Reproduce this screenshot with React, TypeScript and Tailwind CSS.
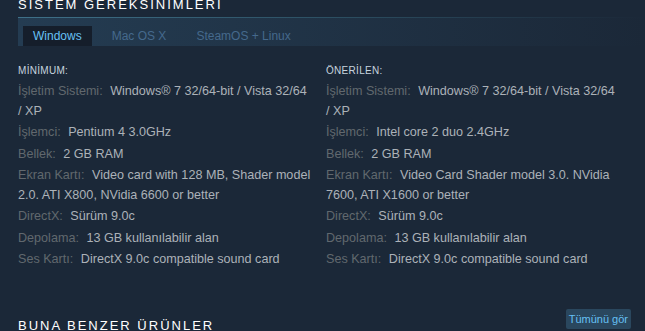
import React from "react";

type Row = { label: string; value: string };

const minRows: Row[] = [
  { label: "İşletim Sistemi:", value: "Windows® 7 32/64-bit / Vista 32/64 /\u00a0XP" },
  { label: "İşlemci:", value: "Pentium 4 3.0GHz" },
  { label: "Bellek:", value: "2 GB RAM" },
  { label: "Ekran Kartı:", value: "Video card with 128 MB, Shader model 2.0. ATI X800, NVidia 6600 or better" },
  { label: "DirectX:", value: "Sürüm 9.0c" },
  { label: "Depolama:", value: "13 GB kullanılabilir alan" },
  { label: "Ses Kartı:", value: "DirectX 9.0c compatible sound card" },
];

const recRows: Row[] = [
  { label: "İşletim Sistemi:", value: "Windows® 7 32/64-bit / Vista 32/64 /\u00a0XP" },
  { label: "İşlemci:", value: "Intel core 2 duo 2.4GHz" },
  { label: "Bellek:", value: "2 GB RAM" },
  { label: "Ekran Kartı:", value: "Video Card Shader model 3.0. NVidia 7600, ATI X1600 or better" },
  { label: "DirectX:", value: "Sürüm 9.0c" },
  { label: "Depolama:", value: "13 GB kullanılabilir alan" },
  { label: "Ses Kartı:", value: "DirectX 9.0c compatible sound card" },
];

function Col({ title, rows, className }: { title: string; rows: Row[]; className?: string }) {
  return (
    <div className={className}>
      <div className="text-[10px] leading-[14px] tracking-[0.3px] text-[#c6d4df] mb-[4px]">{title}</div>
      <ul>
        {rows.map((r) => (
          <li key={r.label} className="text-[12.6px] leading-[19.5px] mb-[2px]">
            <span className="text-[#61686e] mr-[4px]">{r.label}</span>{" "}
            <span className="text-[#acb2b8]">{r.value}</span>
          </li>
        ))}
      </ul>
    </div>
  );
}

export default function App() {
  return (
    <div
      className="w-[645px] h-[331px] overflow-hidden bg-[#1b2838]"
      style={{ fontFamily: '"Liberation Sans", Arial, sans-serif' }}
    >
      <div className="pl-[18px] pr-[14px]">
        <h2 className="-mt-[2px] text-[13px] leading-[13px] tracking-[2px] text-white font-normal">
          SISTEM GEREKSINIMLERI
        </h2>
        <div className="mt-[6px] -mr-[14px]">
          <div className="h-px bg-gradient-to-r from-[#3f7189] via-[#2c4f62] to-[#1b2838]" />
          <div className="h-[28px] flex items-end gap-[10px] pl-[5px] bg-gradient-to-r from-[#243c52] to-[#1b2838]">
            <div className="h-[20px] px-[10px] leading-[20px] text-[12px] text-[#67c1f5] bg-[#151e2b]">Windows</div>
            <div className="h-[20px] px-[10px] leading-[20px] text-[12px] text-[#45698c]">Mac OS X</div>
            <div className="h-[20px] px-[10px] leading-[20px] text-[12px] text-[#45698c]">SteamOS + Linux</div>
          </div>
        </div>
        <div className="mt-[18px] flex">
          <Col title="MİNİMUM:" rows={minRows} className="w-[296px]" />
          <Col title="ÖNERİLEN:" rows={recRows} className="w-[300px] ml-[12px]" />
        </div>
        <div className="mt-[37px] flex justify-between items-end">
          <h2 className="text-[13px] leading-[13px] tracking-[2px] text-white font-normal">BUNA BENZER ÜRÜNLER</h2>
          <div className="mb-[3px] h-[20px] px-[3px] leading-[20px] text-[11px] text-[#66c0f4] bg-[#2a475e] rounded-[2px]">
            Tümünü gör
          </div>
        </div>
      </div>
    </div>
  );
}
